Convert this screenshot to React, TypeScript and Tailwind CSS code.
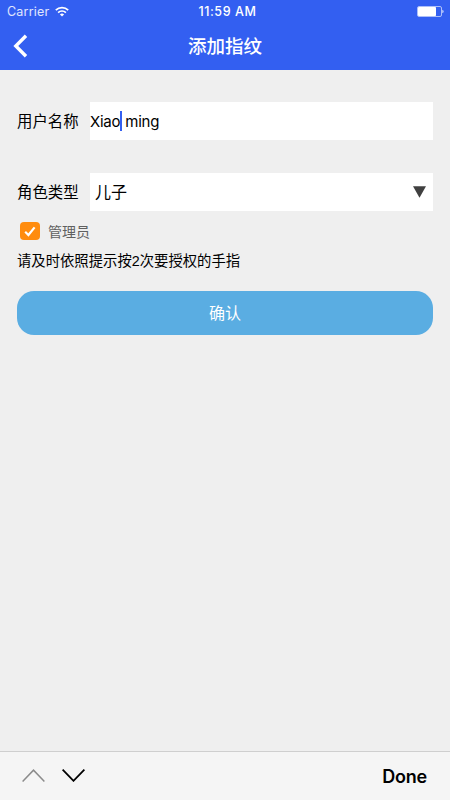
import type { ReactNode } from "react";

function WifiIcon() {
  return (
    <svg viewBox="0 0 14 11" className="ml-[6px] -mt-[2px] w-[14px] h-[11px]" fill="none" stroke="white" strokeWidth="1.7">
      <path d="M0.8 4.2a8.9 8.9 0 0 1 12.4 0" />
      <path d="M3.1 6.6a5.6 5.6 0 0 1 7.8 0" />
      <path d="M7 10.6 4.9 8.5a3 3 0 0 1 4.2 0z" fill="white" stroke="none" />
    </svg>
  );
}

function BatteryIcon() {
  return (
    <svg viewBox="0 0 28 12" className="w-7 h-3" fill="none">
      <rect x="0.5" y="0.5" width="24" height="10" rx="1.5" stroke="white" strokeOpacity="0.6" />
      <rect x="1" y="1" width="18" height="9" rx="0.8" fill="white" />
      <path d="M25.3 3.8c1.8.4 1.8 3 0 3.4z" fill="white" fillOpacity="0.8" />
    </svg>
  );
}

function Header() {
  return (
    <header className="h-[70px] bg-[#335ff1] text-white">
      <div className="h-6 grid grid-cols-3 items-center pl-[7px] pr-[5px] font-['Inter',sans-serif] text-[12.5px]">
        <div className="flex items-center">
          <span className="tracking-[0.2px] text-white/85">Carrier</span>
          <WifiIcon />
        </div>
        <span className="pl-[3px] text-center font-medium tracking-[0.6px]">11:59 AM</span>
        <div className="flex justify-end">
          <BatteryIcon />
        </div>
      </div>
      <div className="h-[46px] grid grid-cols-[1fr_auto_1fr] items-center">
        <button aria-label="返回" className="ml-[13px] mb-[2px] justify-self-start">
          <svg viewBox="0 0 16 24" className="block w-4 h-6" fill="none" stroke="white" strokeWidth="3.4">
            <path d="M13 1.7 2.8 12 13 22.3" />
          </svg>
        </button>
        <h1 className="text-[18.5px] leading-6 font-medium">添加指纹</h1>
      </div>
    </header>
  );
}

function Field({ label, children }: { label: string; children: ReactNode }) {
  return (
    <div className="flex items-center h-[38px]">
      <span className="w-[73px] shrink-0 pt-[2px] text-[15.4px] leading-6 whitespace-nowrap">{label}</span>
      <div className="flex-1 h-full bg-white flex items-center">{children}</div>
    </div>
  );
}

function KeyboardBar() {
  return (
    <footer className="h-[49px] bg-[#f5f5f5] border-t border-[#cfcfcf] flex items-center px-[22px]">
      <svg viewBox="0 0 23 13" className="-mt-px w-[23px] h-[13px]" fill="none" stroke="#8b8b8b" strokeWidth="1.5">
        <path d="M0.6 12.4 11.5 1.2l10.9 11.2" />
      </svg>
      <svg viewBox="0 0 23 13" className="-mt-px ml-[17px] w-[23px] h-[13px]" fill="none" stroke="#000" strokeWidth="1.8">
        <path d="M0.6 0.6 11.5 11.8 22.4 0.6" />
      </svg>
      <span className="ml-auto mr-px font-['Inter',sans-serif] text-[18px] tracking-[-0.2px] font-semibold">Done</span>
    </footer>
  );
}

export default function App() {
  return (
    <div className="w-[450px] h-[800px] flex flex-col bg-[#efefef] text-black font-['Liberation_Sans','Noto_Sans_CJK_SC',sans-serif]">
      <Header />
      <main className="flex-1 px-[17px] pt-8">
        <Field label="用户名称">
          <div className="flex items-center font-['Inter',sans-serif] text-[15px] tracking-[-0.25px]">
            <span className="pt-[2px]">Xiao</span>
            <span className="w-[2px] h-5 -mr-px bg-[#335ff1]" />
            <span className="pt-[2px] whitespace-pre"> ming</span>
          </div>
        </Field>
        <div className="mt-[33px]">
          <Field label="角色类型">
            <span className="pl-[5px] pt-[2px] text-base">儿子</span>
            <svg viewBox="0 0 13 12" className="ml-auto mr-[7px] w-[13px] h-3" fill="#404040">
              <path d="M0 0.3h13L6.5 11.8z" />
            </svg>
          </Field>
        </div>
        <label className="mt-2 ml-[3px] h-6 flex items-center">
          <span className="w-5 h-[18px] rounded-[4px] bg-[#ff8c0e] flex items-center justify-center">
            <svg viewBox="0 0 12 11" className="w-3 h-[11px]" fill="none" stroke="white" strokeWidth="2.2">
              <path d="M1.2 5.8 4.4 9 10.6 1.4" />
            </svg>
          </span>
          <span className="ml-2 pt-[2px] text-[14px] text-[#606060]">管理员</span>
        </label>
        <p className="mt-[6px] text-[14.35px] leading-6">请及时依照提示按2次要授权的手指</p>
        <button className="mt-[18px] pt-[2px] w-full h-[43.5px] rounded-[17px] bg-[#5aade2] text-white text-base">确认</button>
      </main>
      <KeyboardBar />
    </div>
  );
}
